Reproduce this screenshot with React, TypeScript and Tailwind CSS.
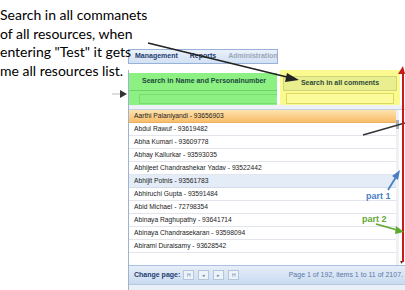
import React from "react";

const people = [
  "Aarthi Palaniyandi - 93656903",
  "Abdul Rawuf - 93619482",
  "Abha Kumari - 93609778",
  "Abhay Kallurkar - 93593035",
  "Abhijeet Chandrashekar Yadav - 93522442",
  "Abhijit Potnis - 93561783",
  "Abhiruchi Gupta - 93591484",
  "Abid Michael - 72798354",
  "Abinaya Raghupathy - 93641714",
  "Abinaya Chandrasekaran - 93598094",
  "Abirami Duraisamy - 93628542",
];

const PagerButton = ({ glyph }: { glyph: string }) => (
  <div className="w-[11px] h-[10px] border border-[#b4c6dc] bg-[#eef3fa] flex items-center justify-center text-[5px] leading-none text-[#6a84a8]">
    {glyph}
  </div>
);

const Annotations = () => (
  <svg className="absolute inset-0 pointer-events-none" width={405} height={290} viewBox="0 0 405 290">
    {/* arrow from text to comments header */}
    <line x1="148" y1="43" x2="291" y2="78" stroke="#222" strokeWidth="1.6" />
    <polygon points="299,80 287,73 285,82" fill="#222" />
    {/* small arrow at panel left */}
    <line x1="112" y1="94" x2="121" y2="94" stroke="#bbb" strokeWidth="1" />
    <polygon points="127,94 120,90 120,98" fill="#333" />
    {/* line to scrollbar */}
    <line x1="363" y1="135" x2="405" y2="123" stroke="#333" strokeWidth="1.6" />
    {/* red line with arrow tip */}
    <line x1="403" y1="72" x2="403" y2="262" stroke="#c41a1a" strokeWidth="2" />
    <polygon points="403,66 398,74 405,74" fill="#c41a1a" />
    {/* part 1 arrow */}
    <line x1="388" y1="190" x2="396" y2="177" stroke="#4a7ec4" strokeWidth="1.8" />
    <polygon points="400,170 392,176 398,180" fill="#4a7ec4" />
    {/* part 2 arrow */}
    <line x1="376" y1="224" x2="397" y2="230" stroke="#5fa830" strokeWidth="1.8" />
    <polygon points="404,232 396,226 395,234" fill="#5fa830" />
  </svg>
);

export default function App() {
  return (
    <div className="relative w-[405px] h-[290px] bg-white overflow-hidden font-['Liberation_Sans',Arial,sans-serif]">
      <div className="pl-[128px] pt-[49px] flex flex-col">
        {/* tab strip */}
        <div className="flex items-center gap-[12px] w-[150px] h-[15px] pl-[6px] border border-[#96b2d6] bg-gradient-to-b from-[#eaf1fa] to-[#d2e1f4] text-[7px] font-bold">
          <span className="text-[#1f3d6e]">Management</span>
          <span className="text-[#1f3d6e]">Reports</span>
          <span className="text-[#9aa8b8]">Administration</span>
        </div>

        {/* grid */}
        <div className="mt-[6px] w-[277px] flex flex-col border-l border-[#9fb3cc]">
          <div className="flex items-end gap-[3px] bg-white">
            <div className="w-[148px] h-[32px] bg-[#8cf083] flex flex-col">
              <div className="h-[18px] flex items-center pl-[13px] text-[7px] font-bold text-[#1d4a3c] border-b border-[#6cd466]">
                Search in Name and Personalnumber
              </div>
              <div className="ml-[10px] mt-[3px] h-[10px] border border-[#78dc72] border-r-0" />
            </div>
            <div className="w-[120px] h-[35px] bg-[#fafa8e] flex flex-col px-[3px] pt-[6px]">
              <div className="h-[15px] flex items-center justify-center border border-[#cfd47a] bg-[#e9ee8e] text-[7px] font-bold text-[#2e4a3a]">
                Search in all comments
              </div>
              <div className="mx-[3px] mt-[2px] h-[11px] border border-[#dcd862] bg-[#fbfb9c]" />
            </div>
          </div>
          <div className="h-[5px] bg-[#eef2f8] border-b border-[#c2d0e0]" />

          <div className="flex">
            <div className="flex-1 flex flex-col">
              {people.map((p, i) => (
                <div
                  key={p}
                  className={
                    i === 0
                      ? "h-[13px] flex items-center pl-[5px] text-[6.7px] text-[#222] bg-gradient-to-b from-[#fde3ae] to-[#f8bd6a] border-b border-[#e8b060]"
                      : i === 5
                      ? "h-[13px] flex items-center pl-[5px] text-[6.7px] text-[#222] bg-[#e4ecf7] border-b border-[#d2dcea]"
                      : "h-[13px] flex items-center pl-[5px] text-[6.7px] text-[#222] bg-white border-b border-[#e2e6ec]"
                  }
                >
                  {p}
                </div>
              ))}
              <div className="h-[12px] bg-white" />
            </div>
            <div className="w-[3px] flex flex-col bg-[#eef0f3]">
              <div className="h-[10px]" />
              <div className="h-[9px] bg-[#a9b0ba]" />
            </div>
            <div className="w-[6px]" />
          </div>

          {/* pager */}
          <div className="h-[19px] flex items-center pl-[5px] pr-[2px] bg-gradient-to-b from-[#e6eef9] to-[#c9dbf1] border-t border-[#a9c1de] text-[7px]">
            <span className="font-bold text-[#1f3d6e]">Change page:</span>
            <div className="flex gap-[4px] ml-[3px]">
              <PagerButton glyph="H" />
              <PagerButton glyph="◂" />
              <PagerButton glyph="▸" />
              <PagerButton glyph="H" />
            </div>
            <span className="ml-auto text-[#5a78a6] whitespace-nowrap">Page 1 of 192, items 1 to 11 of 2107.</span>
          </div>
          <div className="h-[6px] bg-[#eaf0f7] border-t border-[#b6c8de]" />
        </div>
      </div>

      {/* annotation note */}
      <p className="absolute left-0 top-[6px] text-[14px] leading-[18.5px] text-black whitespace-nowrap font-['Lato',sans-serif]">
        Search in all commanets
        <br />
        of all resources, when
        <br />
        entering "Test" it gets
        <br />
        me all resources list.
      </p>
      <span className="absolute left-[366px] top-[190px] text-[9px] font-bold text-[#4a7ec4]">part 1</span>
      <span className="absolute left-[362px] top-[213px] text-[9px] font-bold text-[#5fa830]">part 2</span>
      <span className="absolute left-[400px] top-[258px] text-[6px] text-[#333]">▾</span>
      <Annotations />
    </div>
  );
}
